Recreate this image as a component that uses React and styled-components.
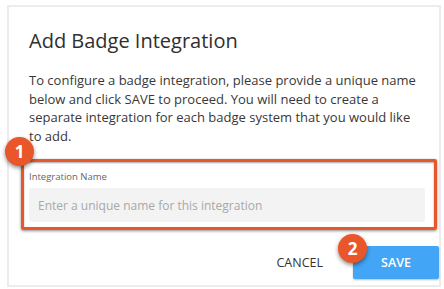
import React from "react";
import styled, { createGlobalStyle } from "styled-components";

const Global = createGlobalStyle`
  html, body { margin: 0; padding: 0; background: #ffffff; }
  body { font-family: "Open Sans", "Noto Sans", sans-serif; }
  * { box-sizing: border-box; }
`;

const Stage = styled.div`
  position: relative;
  width: 444px;
  height: 289px;
  padding: 5px 3px 2px 7px;
`;

const Dialog = styled.div`
  width: 434px;
  height: 282px;
  border: 2px solid #ececec;
  background: #fff;
  display: flex;
  flex-direction: column;
`;

const Body = styled.div`
  padding: 22px 14px 0 20px;
`;

const Title = styled.h2`
  margin: 0;
  font-size: 20px;
  line-height: 24px;
  font-weight: 400;
  color: #2f2f2f;
`;

const Text = styled.p`
  margin: 18px 0 0;
  font-size: 13px;
  line-height: 18.6px;
  color: #383838;
`;

const Field = styled.div`
  margin-top: 26px;
  display: flex;
  flex-direction: column;
`;

const Label = styled.label`
  font-size: 9.5px;
  line-height: 12px;
  color: #666;
`;

const Input = styled.input`
  margin-top: 5px;
  height: 34px;
  border: none;
  border-radius: 2px;
  background: #f3f3f3;
  padding: 0 9px;
  font-family: "Open Sans", sans-serif;
  font-size: 12px;
  color: #333;
  outline: none;
  &::placeholder { color: #a8a8a8; }
`;

const Footer = styled.div`
  margin-top: auto;
  margin-bottom: 6px;
  display: flex;
  justify-content: flex-end;
  align-items: center;
  gap: 30px;
`;

const Button = styled.button`
  border: none;
  font-family: "Open Sans", sans-serif;
  font-size: 12.5px;
  font-weight: ${(p) => (p.$primary ? 600 : 500)};
  height: 33px;
  border-radius: 2px;
  cursor: pointer;
  background: ${(p) => (p.$primary ? "#42a5f5" : "transparent")};
  color: ${(p) => (p.$primary ? "#ffffff" : "#333333")};
  padding: 0;
  width: ${(p) => (p.$primary ? "86px" : "auto")};
  box-shadow: ${(p) => (p.$primary ? "0 1px 2px rgba(0,0,0,0.25)" : "none")};
`;

const Highlight = styled.div`
  position: absolute;
  left: 21px;
  top: 159px;
  width: 416px;
  height: 71px;
  border: 3px solid #e8562a;
  border-radius: 2px;
  box-shadow: 0 1px 3px rgba(0, 0, 0, 0.45), inset 0 1px 2px rgba(0, 0, 0, 0.35);
  pointer-events: none;
`;

const Marker = styled.div`
  position: absolute;
  left: ${(p) => p.$x}px;
  top: ${(p) => p.$y}px;
  width: 29px;
  height: 29px;
  border-radius: 50%;
  background: #e8562a;
  color: #fff;
  font-family: "Open Sans", sans-serif;
  font-weight: 700;
  font-size: 17px;
  line-height: 29px;
  text-align: center;
  box-shadow: 0 2px 4px rgba(0, 0, 0, 0.45);
`;

export default function App() {
  return (
    <>
      <Global />
      <Stage>
        <Dialog>
          <Body>
            <Title>Add Badge Integration</Title>
            <Text>
              To configure a badge integration, please provide a unique name below and click SAVE to proceed. You will need to create a separate integration for each badge system that you would like to add.
            </Text>
            <Field>
              <Label>Integration Name</Label>
              <Input placeholder="Enter a unique name for this integration" />
            </Field>
          </Body>
          <Footer>
            <Button>CANCEL</Button>
            <Button $primary>SAVE</Button>
          </Footer>
        </Dialog>
        <Highlight />
        <Marker $x={5} $y={137}>1</Marker>
        <Marker $x={338} $y={234}>2</Marker>
      </Stage>
    </>
  );
}
